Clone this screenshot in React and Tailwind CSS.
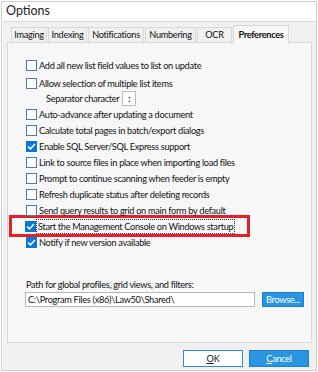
import React from 'react';

const font = { fontFamily: 'Lato, "Noto Sans", sans-serif' };

function Check({ checked }) {
    return checked ? (
        <span className="w-[11px] h-[11px] bg-[#0a78d7] border border-[#0a78d7] flex items-center justify-center shrink-0">
            <svg width="9" height="9" viewBox="0 0 9 9">
                <path d="M1.2 4.6 L3.5 6.9 L7.9 1.9" fill="none" stroke="white" strokeWidth="1.5" />
            </svg>
        </span>
    ) : (
        <span className="w-[11px] h-[11px] bg-white border border-[#4d79ad] shrink-0" />
    );
}

function Row({ label, checked, focus }) {
    return (
        <div className="h-[16px] flex items-center whitespace-nowrap">
            <Check checked={checked} />
            <span className={`ml-[1px] px-[1px] leading-[13px] ${focus ? 'outline outline-1 outline-dotted outline-[#333]' : ''}`}>{label}</span>
        </div>
    );
}

export default function App() {
    const tabs = [
        ['Imaging', 'w-[36px]'],
        ['Indexing', 'w-[39px]'],
        ['Notifications', 'w-[56px]'],
        ['Numbering', 'w-[51px]'],
        ['OCR', 'w-[35px]'],
    ];

    return (
        <div className="w-[318px] h-[372px] bg-white p-[1px] text-[#111] text-[9.2px] tracking-[-0.3px] whitespace-nowrap" style={font}>
            <div className="h-full border border-[#cfcfcf] flex flex-col">
                <div className="h-[19px] px-[4px] flex items-center text-[12.5px] text-[#222] tracking-normal">Options</div>
                <div className="flex-1 bg-[#f0f0f0] border-t border-[#dadada] ml-[1px] flex flex-col">
                    <div className="flex items-end pl-[8px] pt-[3px]">
                        {tabs.map(([t, w]) => (
                            <div key={t} className={`${w} h-[15px] mr-[1px] bg-[#f0f0f0] border border-b-0 border-[#d9d9d9] flex items-center justify-center`}>
                                {t}
                            </div>
                        ))}
                        <div className="h-[18px] w-[56px] -mb-[1px] relative bg-[#f7f7f7] border border-b-0 border-[#d9d9d9] flex items-center justify-center font-bold">
                            Preferences
                        </div>
                    </div>
                    <div className="mx-[4px] h-[301px] border border-[#d9d9d9] bg-[#f7f7f7] pl-[18px] pt-[14px]">
                        <Row label="Add all new list field values to list on update" />
                        <div className="h-[2px]" />
                        <Row label="Allow selection of multiple list items" />
                        <div className="h-[15px] flex items-center pl-[20px]">
                            <span>Separator character</span>
                            <span className="ml-[3px] w-[14px] h-[15px] bg-white border border-[#bcbcbc] flex items-center justify-center font-bold leading-none">:</span>
                        </div>
                        <Row label="Auto-advance after updating a document" />
                        <Row label="Calculate total pages in batch/export dialogs" />
                        <Row label="Enable SQL Server/SQL Express support" checked />
                        <Row label="Link to source files in place when importing load files" />
                        <Row label="Prompt to continue scanning when feeder is empty" />
                        <Row label="Refresh duplicate status after deleting records" />
                        <Row label="Send query results to grid on main form by default" />
                        <div className="-ml-[17px] w-[241px] h-[22px] border-[3px] border-[#e5202b] pl-[13px] flex items-center -my-[3px]">
                            <Row label="Start the Management Console on Windows startup" checked focus />
                        </div>
                        <Row label="Notify if new version available" checked />
                        <div className="mt-[28px] leading-[13px]">Path for global profiles, grid views, and filters:</div>
                        <div className="mt-[1px] -ml-[1px] flex items-center">
                            <div className="w-[230px] h-[15px] bg-white border border-[#b8b8b8] flex items-center px-[2px]">C:\Program Files (x86)\Law50\Shared\</div>
                            <div className="ml-[7px] w-[42px] h-[15px] bg-[#2a95e0] border border-[#1a7fd0] text-white flex items-center justify-center">Browse...</div>
                        </div>
                    </div>
                    <div className="flex justify-end pr-[7px] pt-[7px] gap-[6px]">
                        <div className="w-[60px] h-[17px] bg-white border border-[#2a8fdc] flex items-center justify-center"><span className="underline">O</span>K</div>
                        <div className="w-[60px] h-[17px] bg-[#2a95e0] border border-[#1a7fd0] text-white flex items-center justify-center"><span className="underline">C</span>ancel</div>
                    </div>
                </div>
            </div>
        </div>
    );
}
